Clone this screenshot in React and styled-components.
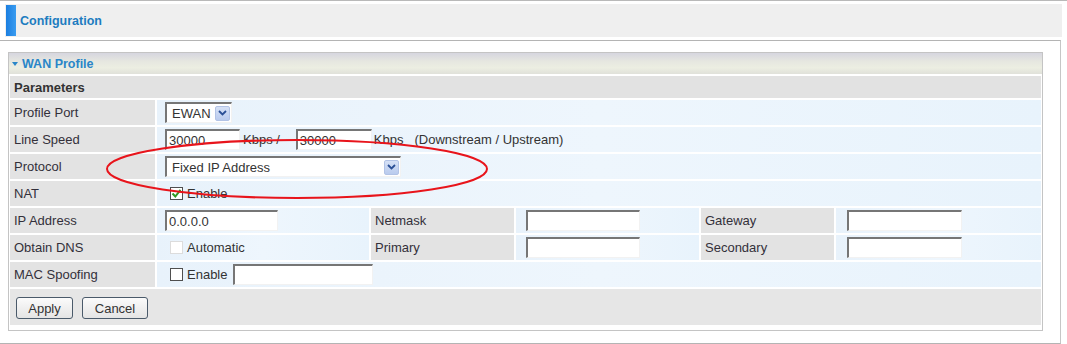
import styled, { createGlobalStyle } from "styled-components";

const GlobalStyle = createGlobalStyle`
    html, body {
        margin: 0;
        padding: 0;
        background: #ffffff;
    }
    body {
        font-family: "Liberation Sans", Arial, sans-serif;
        font-size: 13px;
        color: #333333;
    }
`;

function Chevron() {
    return (
        <svg width="9" height="6" viewBox="0 0 9 6">
            <path d="M1 1 L4.5 4.5 L8 1" fill="none" stroke="#2a4f96" strokeWidth="1.8" />
        </svg>
    );
}

function Select({ value, width }) {
    return (
        <SelectBox width={width}>
            <span>{value}</span>
            <ArrowButton><Chevron /></ArrowButton>
        </SelectBox>
    );
}

function Check({ checked, disabled, label }) {
    return (
        <CheckWrap>
            <Box disabled={disabled}>
                {checked && (
                    <svg width="11" height="11" viewBox="0 0 11 11">
                        <path d="M1.5 5.5 L4.3 8.5 L9.5 1.8" fill="none" stroke="#2f9a24" strokeWidth="2" />
                    </svg>
                )}
            </Box>
            <span>{label}</span>
        </CheckWrap>
    );
}

export default function App() {
    return (
        <>
            <GlobalStyle />
            <Page>
                <TopBar>
                    <Header>
                        <Accent />
                        <HeaderTitle>Configuration</HeaderTitle>
                    </Header>
                </TopBar>
                <Content>
                    <Panel>
                        <PanelHeader>
                            <Caret />
                            <span>WAN Profile</span>
                        </PanelHeader>
                        <Grid>
                            <SectionRow>Parameters</SectionRow>

                            <Label>Profile Port</Label>
                            <Value span={5}><Select value="EWAN" width={67} /></Value>

                            <Label>Line Speed</Label>
                            <Value span={5}>
                                <TextInput width={75} defaultValue="30000" readOnly />
                                <Unit gap={3}>Kbps /</Unit>
                                <TextInput width={76} defaultValue="30000" readOnly style={{ marginLeft: 16 }} />
                                <Unit gap={2}>Kbps</Unit>
                                <Unit gap={11}>(Downstream / Upstream)</Unit>
                            </Value>

                            <Label>Protocol</Label>
                            <Value span={5}><Select value="Fixed IP Address" width={236} /></Value>

                            <Label>NAT</Label>
                            <Value span={5}><Check checked label="Enable" /></Value>

                            <Label>IP Address</Label>
                            <Value><TextInput width={113} defaultValue="0.0.0.0" readOnly /></Value>
                            <Label>Netmask</Label>
                            <Value pad={10}><TextInput width={114} readOnly /></Value>
                            <Label>Gateway</Label>
                            <Value pad={11}><TextInput width={115} readOnly /></Value>

                            <Label>Obtain DNS</Label>
                            <Value><Check disabled label="Automatic" /></Value>
                            <Label>Primary</Label>
                            <Value pad={10}><TextInput width={114} readOnly /></Value>
                            <Label>Secondary</Label>
                            <Value pad={11}><TextInput width={115} readOnly /></Value>

                            <Label>MAC Spoofing</Label>
                            <Value span={5}>
                                <Check label="Enable" />
                                <TextInput width={140} readOnly style={{ marginLeft: 6 }} />
                            </Value>

                            <ButtonRow>
                                <Button>Apply</Button>
                                <Button wide>Cancel</Button>
                            </ButtonRow>
                        </Grid>
                    </Panel>
                </Content>
                <Marker width="1067" height="344" viewBox="0 0 1067 344">
                    <ellipse cx="297" cy="169" rx="190" ry="29" fill="none" stroke="#e8141b" strokeWidth="2" />
                </Marker>
            </Page>
        </>
    );
}

const Page = styled.div`
    position: relative;
    width: 1067px;
    height: 344px;
    overflow: hidden;
    background: #ffffff;
`;

const TopBar = styled.div`
    border-top: 1px solid #b9b9b9;
    padding: 3px 5px 3px 5px;
    width: 1057px;
`;

const Header = styled.div`
    display: flex;
    align-items: center;
    height: 33px;
    background: #efefef;
`;

const Accent = styled.div`
    width: 10px;
    height: 31px;
    margin-left: 1px;
    background: linear-gradient(90deg, #1b7ee0, #3a9cf0);
`;

const HeaderTitle = styled.span`
    margin-left: 4px;
    font-size: 12.5px;
    font-weight: bold;
    color: #1d7cc0;
`;

const Content = styled.div`
    width: 1061px;
    height: 304px;
    box-sizing: border-box;
    border-top: 1px solid #b4b4b4;
    border-right: 1px solid #c6c6c6;
    border-bottom: 1px solid #b4b4b4;
    padding: 11px 0 0 8px;
`;

const Panel = styled.div`
    width: 1035px;
    box-sizing: border-box;
    border: 1px solid #c4c4c4;
    padding-bottom: 5px;
    background: #ffffff;
`;

const PanelHeader = styled.div`
    display: flex;
    align-items: center;
    height: 21px;
    background: linear-gradient(180deg, #d6d6df 0%, #e6e7e0 40%, #eceee2 70%, #e0e1da 100%);
    font-size: 12.5px;
    font-weight: bold;
    color: #2a86c8;
`;

const Caret = styled.span`
    width: 0;
    height: 0;
    margin: 0 4px 0 3px;
    border-left: 3px solid transparent;
    border-right: 3px solid transparent;
    border-top: 4px solid #2a86c8;
`;

const Grid = styled.div`
    display: grid;
    grid-template-columns: 145px 212px 143px 183px 133px 1fr;
    grid-template-rows: 22px repeat(7, 25px) 36px;
    gap: 2px;
    padding: 2px 1px 0 1px;
`;

const SectionRow = styled.div`
    grid-column: 1 / -1;
    display: flex;
    align-items: center;
    padding-left: 4px;
    background: #e2e2e2;
    font-weight: bold;
    color: #333333;
`;

const Label = styled.div`
    display: flex;
    align-items: center;
    padding-left: 4px;
    background: #e3e3e3;
    color: #33303a;
`;

const Value = styled.div`
    grid-column: span ${({ span }) => span || 1};
    display: flex;
    align-items: center;
    padding-left: ${({ pad }) => pad || 8}px;
    background: linear-gradient(90deg, #e8f2fb, #eef6fd 50%, #e8f3fc);
    color: #333333;
`;

const TextInput = styled.input`
    box-sizing: border-box;
    width: ${({ width }) => width}px;
    height: 21px;
    padding: 1px 2px 0 2px;
    border-top: 2px solid #767676;
    border-left: 2px solid #767676;
    border-right: 1px solid #f2f2f2;
    border-bottom: 1px solid #f2f2f2;
    background: #ffffff;
    font-family: "Liberation Sans", Arial, sans-serif;
    font-size: 13px;
    color: #333333;
    outline: none;
`;

const Unit = styled.span`
    margin-left: ${({ gap }) => gap}px;
`;

const SelectBox = styled.div`
    box-sizing: border-box;
    width: ${({ width }) => width}px;
    height: 21px;
    display: flex;
    align-items: center;
    justify-content: space-between;
    padding: 0 1px 0 5px;
    border-top: 2px solid #767676;
    border-left: 2px solid #767676;
    border-right: 1px solid #f2f2f2;
    border-bottom: 1px solid #f2f2f2;
    background: #ffffff;
`;

const ArrowButton = styled.div`
    width: 15px;
    height: 15px;
    box-sizing: border-box;
    display: flex;
    align-items: center;
    justify-content: center;
    background: linear-gradient(180deg, #d6e1f6, #b9cbee);
    border: 1px solid #b2c3e6;
    border-radius: 2px;
`;

const CheckWrap = styled.label`
    display: flex;
    align-items: center;
    margin-left: 5px;
    gap: 4px;
`;

const Box = styled.span`
    box-sizing: border-box;
    width: 13px;
    height: 13px;
    display: flex;
    align-items: center;
    justify-content: center;
    background: #ffffff;
    border: 1px solid ${({ disabled }) => (disabled ? "#dcdcdc" : "#4f4f4f")};
`;

const ButtonRow = styled.div`
    grid-column: 1 / -1;
    display: flex;
    align-items: flex-start;
    gap: 9px;
    padding: 8px 0 0 6px;
    background: #e6e6e6;
`;

const Button = styled.button`
    width: ${({ wide }) => (wide ? 66 : 57)}px;
    height: 22px;
    padding: 0;
    border: 1px solid #4a5a6a;
    border-radius: 3px;
    background: linear-gradient(180deg, #fbfbfb, #e4e4e4);
    font-family: "Liberation Sans", Arial, sans-serif;
    font-size: 13px;
    color: #333333;
`;

const Marker = styled.svg`
    position: absolute;
    top: 0;
    left: 0;
    pointer-events: none;
`;
